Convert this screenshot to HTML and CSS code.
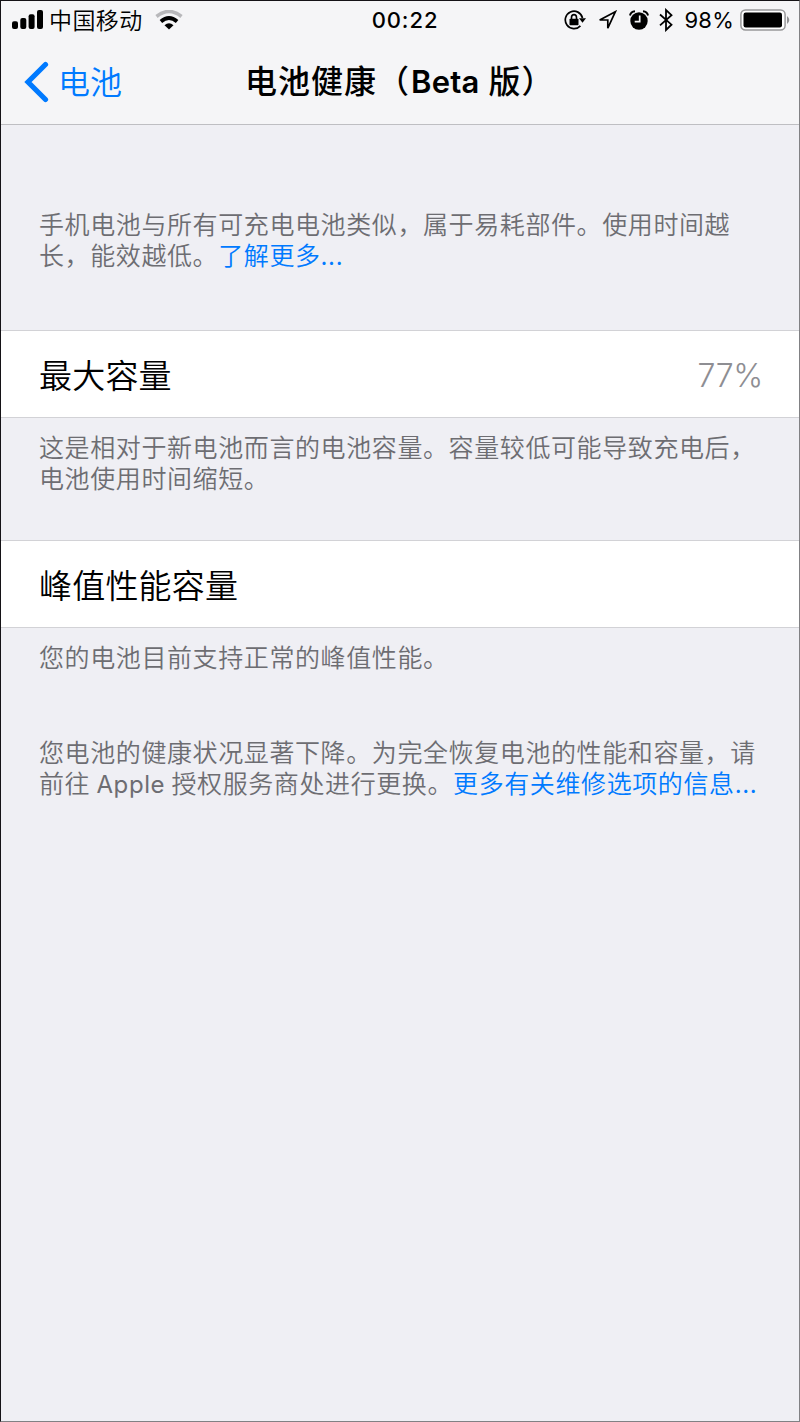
FILE: index.html
```html
<!DOCTYPE html>
<html lang="zh-CN">
<head>
<meta charset="utf-8">
<title>电池健康</title>
<link rel="stylesheet" href="styles.css">
</head>
<body>
<div class="screen">
  <header class="header">
    <div class="status">
      <div class="status-left">
        <svg class="signal" width="31" height="20" viewBox="0 0 31 20"><rect x="0" y="11.3" width="6" height="7.7" rx="2"/><rect x="8.3" y="8" width="6" height="11" rx="2"/><rect x="16.6" y="4.2" width="6" height="14.8" rx="2"/><rect x="25" y="0" width="6" height="19" rx="2"/></svg>
        <span class="carrier">中国移动</span>
        <svg class="wifi" width="28" height="20" viewBox="0 0 28 20"><g fill="none"><path d="M1.500 6.500Q14-3.500 26.500 6.500" stroke="#b8b8bb" stroke-width="3.600"/><path d="M5.900 11.500Q14 4.500 22.100 11.500" stroke="#000" stroke-width="3.800"/></g><path d="M9.500 15.200Q14 11.200 18.500 15.200L14 19.600Z"/></svg>
      </div>
      <div class="clock">00:22</div>
      <div class="status-right">
        <svg class="lock" width="22" height="20" viewBox="0 0 22 20"><path d="M18.500 8A8.700 8.700 0 1 0 16.400 15.800" fill="none" stroke="#000" stroke-width="1.700"/><path d="M15 8.300H22L18.500 12.800Z"/><rect x="5.500" y="8.700" width="9" height="6.500" rx=".7"/><path d="M7.500 9V7.500a2.500 2.900 0 0 1 5 0V9" fill="none" stroke="#000" stroke-width="1.600"/></svg>
        <svg class="location" width="19" height="20" viewBox="0 0 19 20"><path d="M17.300 1.800L1.700 10H9.800V18.200Z" fill="none" stroke="#000" stroke-width="1.700"/></svg>
        <svg class="alarm" width="20" height="20" viewBox="0 0 20 20"><circle cx="10" cy="11" r="8.700"/><path d="M1 5.500Q1.800 1.600 6 1.200M14 1.200Q18.200 1.600 19 5.500" fill="none" stroke="#000" stroke-width="2"/><path d="M10.700 5.500V11.700H5.700" fill="none" stroke="#f5f5f7" stroke-width="1.700"/></svg>
        <svg class="bluetooth" width="14" height="24" viewBox="0 0 14 24"><path d="M1 6.500L12.500 16.700L7 22V2L12.500 7.200L1 17.400" fill="none" stroke="#000" stroke-width="1.800"/></svg>
        <span class="percent">98%</span>
        <svg class="battery" width="50" height="22" viewBox="0 0 50 22"><rect x=".9" y=".9" width="44.200" height="20.200" rx="4.500" fill="#fff" stroke="#98989a" stroke-width="1.500"/><rect x="3.500" y="3.500" width="38.500" height="15" rx="2.200"/><path d="M47 7Q51.600 11 47 15Z" fill="#929294"/></svg>
      </div>
    </div>
    <nav class="nav">
      <a class="back"><svg width="25" height="42" viewBox="0 0 25 42"><path d="M21.500 3.500L4 21L21.500 38.500" fill="none" stroke="#007aff" stroke-width="5.200" stroke-linecap="round"/></svg><span>电池</span></a>
      <h1 class="title"><span>电池健康</span><span>（</span><span class="beta">Beta</span><span>版</span><span>）</span></h1>
    </nav>
  </header>
  <main>
    <p class="note intro">手机电池与所有可充电电池类似，属于易耗部件。使用时间越<br>长，能效越低。<a class="link">了解更多<span class="dots">...</span></a></p>
    <section class="row"><span>最大容量</span><span class="value">77%</span></section>
    <p class="note capacity">这是相对于新电池而言的电池容量。容量较低可能导致充电后，<br>电池使用时间缩短。</p>
    <section class="row"><span>峰值性能容量</span></section>
    <p class="note peak">您的电池目前支持正常的峰值性能。</p>
    <p class="note service">您电池的健康状况显著下降。为完全恢复电池的性能和容量，请<br>前往 <span class="latin">Apple</span> 授权服务商处进行更换。<a class="link">更多有关维修选项的信息<span class="dots">...</span></a></p>
  </main>
</div>
</body>
</html>
```
FILE: styles.css
```css
* { box-sizing: border-box; }
body { margin: 0; font-family: Inter, "Noto Sans CJK SC", sans-serif; }
.screen {
  width: 800px;
  height: 1422px;
  background: #efeff4;
  border: 1px solid #141216;
  border-right-color: #818184;
  border-bottom-color: #818184;
  overflow: hidden;
}
.header { height: 124px; background: #f5f5f7; border-bottom: 1px solid #bebec2; }
.status {
  height: 38px;
  display: grid;
  grid-template-columns: 1fr auto 1fr;
  align-items: center;
}
.status-left, .status-right { display: flex; align-items: center; height: 38px; }
.status-left { padding-left: 11px; }
.carrier { margin-left: 6px; font-size: 23px; font-weight: 350; letter-spacing: .4px; line-height: 38px; padding-top: 1px; white-space: nowrap; }
.wifi { margin-left: 12px; }
.clock { font: 500 22px/38px Inter, sans-serif; letter-spacing: .9px; padding-left: 10px; }
.status-right { justify-content: flex-end; padding-right: 9px; }
.location { margin-left: 12px; }
.alarm { margin-left: 12px; }
.bluetooth { margin-left: 10px; }
.percent { margin: 0 6px 0 12px; font: 400 22px/38px Inter, sans-serif; letter-spacing: .2px; }
.nav { height: 85px; display: flex; align-items: center; }
.back { width: 221px; margin-left: 23px; display: flex; align-items: center; color: #007aff; font-size: 32px; font-weight: 350; line-height: 85px; }
.back span { margin-left: 9px; padding-top: 1px; }
.title { margin: 0; display: flex; align-items: baseline; font-size: 32px; line-height: 85px; font-weight: 500; letter-spacing: 1px; white-space: nowrap; }
.beta { font-weight: 600; font-size: 31px; letter-spacing: .2px; margin: 0 9px 0 1px; }
.note { margin: 0; padding-left: 38px; font-size: 25px; font-weight: 350; line-height: 31px; letter-spacing: .6px; word-spacing: -1.4px; color: #6d6d72; white-space: nowrap; }
.link { color: #007aff; }
.latin, .dots { font-weight: 400; font-size: 24px; }
.intro { padding-top: 85px; height: 205px; }
.row {
  height: 88px;
  padding: 0 36px 0 38px;
  display: flex;
  align-items: center;
  justify-content: space-between;
  background: #fff;
  border: solid #d2d2d6;
  border-width: 1px 0;
  font-size: 33px;
  font-weight: 350;
  letter-spacing: .2px;
  color: #000;
}
.value { padding-top: 3px; font-size: 32px; letter-spacing: -.3px; color: #8e8e93; }
.capacity { padding-top: 15px; height: 122px; }
.peak { padding-top: 15px; height: 95px; }
.service { padding-top: 15px; }
```
